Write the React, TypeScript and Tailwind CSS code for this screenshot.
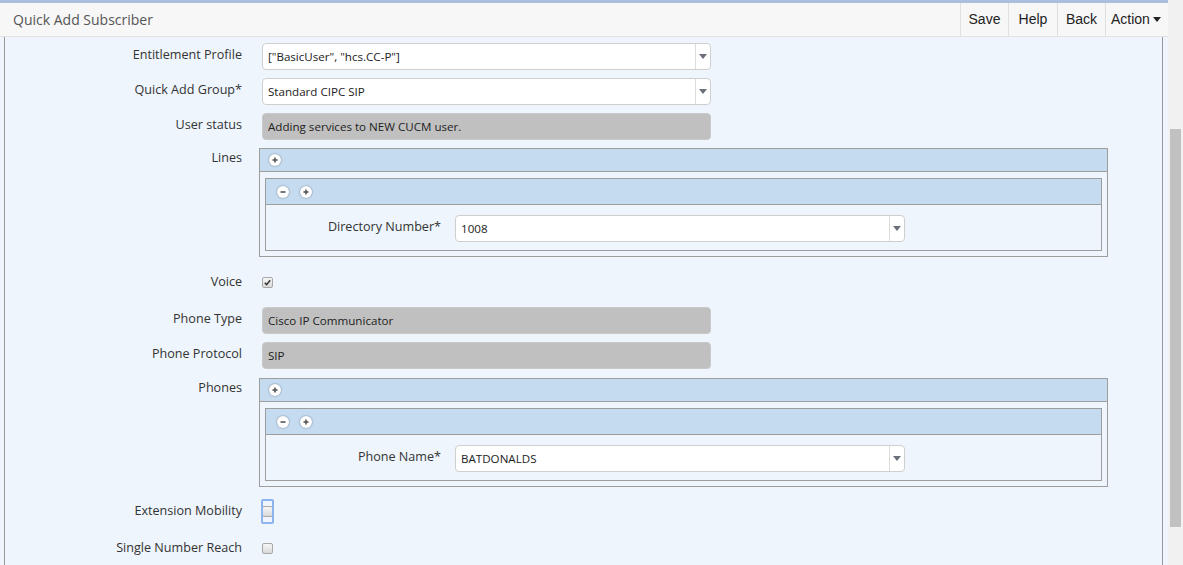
import React from 'react';

const font = "font-['Open_Sans','Liberation_Sans',sans-serif]";

function Arrow() {
  return (
    <svg width="8" height="5" viewBox="0 0 8 5">
      <path d="M0 0 H8 L4 5 Z" fill="#6b6f7a" />
    </svg>
  );
}

function Select({ value, width = 'w-[449px]' }: { value: string; width?: string }) {
  return (
    <div className={`flex h-[27px] ${width} items-center rounded-[4px] border border-[#cfcfcf] bg-white`}>
      <span className="flex-1 truncate pl-[5px] text-[11.6px] text-[#222]">{value}</span>
      <span className="flex h-full w-[15px] items-center justify-center border-l border-[#dcdcdc]">
        <Arrow />
      </span>
    </div>
  );
}

function ReadOnly({ value }: { value: string }) {
  return (
    <div className="flex h-[27px] w-[449px] items-center rounded-[4px] border border-[#c9c9c9] bg-[#c0c0c0]">
      <span className="pl-[5px] text-[11.6px] text-[#222]">{value}</span>
    </div>
  );
}

function RoundBtn({ kind }: { kind: 'plus' | 'minus' }) {
  return (
    <span className="flex h-[12px] w-[12px] items-center justify-center rounded-full bg-white shadow-[0_0_2px_rgba(0,0,0,0.45)]">
      <svg width="6" height="6" viewBox="0 0 6 6">
        <path d="M0.5 3 H5.5" stroke="#555" strokeWidth="1.6" />
        {kind === 'plus' && <path d="M3 0.5 V5.5" stroke="#555" strokeWidth="1.6" />}
      </svg>
    </span>
  );
}

function Checkbox({ checked = false }: { checked?: boolean }) {
  return (
    <span className="flex h-[11px] w-[11px] items-center justify-center rounded-[2px] border border-[#a8a8a8] bg-linear-to-b from-[#f6f6f6] to-[#dadada]">
      {checked && (
        <svg width="7" height="7" viewBox="0 0 7 7">
          <path d="M0.8 3.8 L2.6 5.6 L6.2 1.2" stroke="#333" strokeWidth="1.5" fill="none" />
        </svg>
      )}
    </span>
  );
}

function Row({ label, children }: { label: string; children: React.ReactNode }) {
  return (
    <div className="flex items-start">
      <div className="w-[237px] pt-[3px] text-right text-[12.6px] text-[#333]">{label}</div>
      <div className="ml-[20px]">{children}</div>
    </div>
  );
}

function CheckRow({ label, children }: { label: string; children: React.ReactNode }) {
  return (
    <div className="flex h-[34px] items-center">
      <div className="w-[237px] text-right text-[12.6px] text-[#333]">{label}</div>
      <div className="ml-[20px] flex">{children}</div>
    </div>
  );
}

function Panel({ label, value }: { label: string; value: string }) {
  return (
    <div className="w-[849px] -ml-[3px] border border-[#9d9d9d]">
      <div className="flex h-[23px] items-center border-b border-[#9d9d9d] bg-[#c5dbf0] pl-[9px]">
        <RoundBtn kind="plus" />
      </div>
      <div className="px-[5px] pt-[6px] pb-[5px]">
        <div className="border border-[#9d9d9d]">
          <div className="flex h-[26px] items-center gap-[11px] border-b border-[#9d9d9d] bg-[#c5dbf0] pl-[11px]">
            <RoundBtn kind="minus" />
            <RoundBtn kind="plus" />
          </div>
          <div className="flex items-center pt-[10px] pb-[8px]">
            <div className="w-[175px] pb-[3px] text-right text-[12.6px] text-[#333]">{label}</div>
            <div className="ml-[14px]">
              <Select value={value} width="w-[450px]" />
            </div>
          </div>
        </div>
      </div>
    </div>
  );
}

export default function App() {
  return (
    <div className={`flex h-[565px] w-[1183px] overflow-hidden bg-[#eef5fc] ${font}`}>
      <div className="flex w-[1168px] flex-col">
        <div className="h-[3px] bg-[#a9bfdb]" />
        {/* Header */}
        <div className="flex h-[34px] items-stretch border-b border-[#e2e2e2] bg-[#f7f7f7]">
          <div className="flex items-center pl-[13px] text-[14px] text-[#555]">Quick Add Subscriber</div>
          <div className="ml-auto flex items-stretch pr-[5px] font-['Liberation_Sans',Arial,sans-serif] text-[14px] text-[#222]">
            <div className="flex w-[48px] items-center justify-center border-l border-[#e0e0e0]">Save</div>
            <div className="flex w-[49px] items-center justify-center border-l border-[#e0e0e0]">Help</div>
            <div className="flex w-[48px] items-center justify-center border-l border-[#e0e0e0]">Back</div>
            <div className="flex w-[58px] items-center gap-[3px] border-l border-[#e0e0e0] pl-[5px]">
              Action
              <svg width="8" height="5" viewBox="0 0 8 5">
                <path d="M0 0 H8 L4 5 Z" fill="#222" />
              </svg>
            </div>
          </div>
        </div>
        {/* Content */}
        <div className="flex-1 pl-[4px] pr-[5px]">
          <div className="h-full border-l border-r border-[#9a9a9a] pt-[6px]">
            <div className="flex flex-col gap-[8px]">
              <Row label="Entitlement Profile">
                <Select value={'["BasicUser", "hcs.CC-P"]'} />
              </Row>
              <Row label="Quick Add Group*">
                <Select value="Standard CIPC SIP" />
              </Row>
              <Row label="User status">
                <ReadOnly value="Adding services to NEW CUCM user." />
              </Row>
              <div className="flex items-start">
                <div className="w-[237px] pt-[1px] text-right text-[12.6px] text-[#333]">Lines</div>
                <div className="ml-[20px]">
                  <Panel label="Directory Number*" value="1008" />
                </div>
              </div>
            </div>
            <div className="mt-[8px]">
              <CheckRow label="Voice">
                <Checkbox checked />
              </CheckRow>
            </div>
            <div className="mt-[8px] flex flex-col gap-[8px]">
              <Row label="Phone Type">
                <ReadOnly value="Cisco IP Communicator" />
              </Row>
              <Row label="Phone Protocol">
                <ReadOnly value="SIP" />
              </Row>
            </div>
            <div className="mt-[9px] flex items-start">
              <div className="w-[237px] pt-[1px] text-right text-[12.6px] text-[#333]">Phones</div>
              <div className="ml-[20px]">
                <Panel label="Phone Name*" value="BATDONALDS" />
              </div>
            </div>
            <div className="mt-[7px]">
              <CheckRow label="Extension Mobility">
                <span className="relative flex">
                  <Checkbox />
                  <span className="absolute -left-[1px] -top-[7px] h-[25px] w-[13px] rounded-[2px] border-2 border-[#8cb4ee]" />
                </span>
              </CheckRow>
            </div>
            <div className="mt-[3px]">
              <CheckRow label="Single Number Reach">
                <Checkbox />
              </CheckRow>
            </div>
          </div>
        </div>
      </div>
      {/* Scrollbar */}
      <div className="relative w-[15px] bg-[#f1f1f1]">
        <div className="absolute left-[2px] top-[129px] h-[398px] w-[11px] bg-[#c1c1c1]" />
      </div>
    </div>
  );
}
